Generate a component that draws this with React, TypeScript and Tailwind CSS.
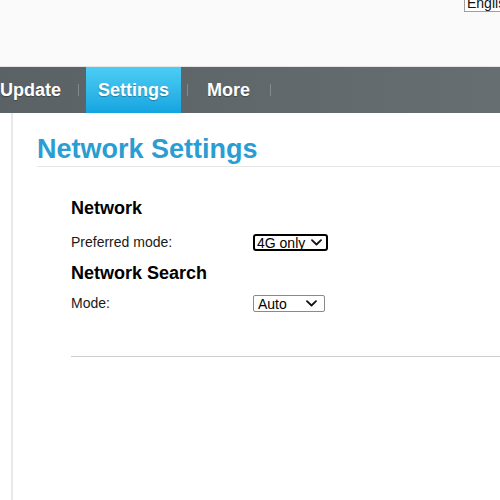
import React from "react";

function Chevron() {
  return (
    <svg width="11" height="7" viewBox="0 0 11 7" fill="none">
      <path d="M1 1.2 L5.5 5.5 L10 1.2" stroke="#111" strokeWidth="1.8" strokeLinecap="round" strokeLinejoin="round" />
    </svg>
  );
}

function Sep() {
  return <div className="w-px h-[12px] bg-[#9aa2a6] opacity-60" />;
}

export default function App() {
  return (
    <div className="w-[500px] h-[500px] overflow-hidden bg-white flex flex-col" style={{ fontFamily: '"Liberation Sans", Arial, sans-serif' }}>
      {/* header */}
      <div className="h-[67px] bg-[#fafafa] border-b border-[#e4e4e4] flex items-start pl-[464px] overflow-hidden">
        <div className="-mt-[5px] h-[17px] border border-[#a0a0a0] bg-white px-[2px] text-[14px] leading-[15px] text-[#111] whitespace-nowrap">
          English
        </div>
      </div>
      {/* nav */}
      <div className="h-[46px] bg-gradient-to-r from-[#5a6266] via-[#60686c] to-[#666e72] flex items-stretch">
        <div className="flex items-center text-white font-bold text-[18px] [text-shadow:0_1px_1px_rgba(0,0,0,0.35)]">
          Update
        </div>
        <div className="flex items-center ml-[17px]"><Sep /></div>
        <div className="ml-[7px] w-[95px] flex items-center justify-center bg-gradient-to-b from-[#4bcdf5] to-[#12a5df] text-white font-bold text-[18px] [text-shadow:0_1px_1px_rgba(0,0,0,0.3)]">
          Settings
        </div>
        <div className="flex items-center ml-[6px]"><Sep /></div>
        <div className="ml-[19px] flex items-center text-white font-bold text-[18px] [text-shadow:0_1px_1px_rgba(0,0,0,0.35)]">
          More
        </div>
        <div className="flex items-center ml-[20px]"><Sep /></div>
      </div>
      {/* body */}
      <div className="flex-1 flex">
        <div className="ml-[11px] w-[2px] bg-[#e8e8e8]" />
        <div className="flex-1 pl-[24px] pt-[19px]">
          <h1 className="text-[27px] font-bold text-[#2a9dd3] leading-[34px] border-b border-[#e6e6e6]">
            Network Settings
          </h1>
          <div className="pl-[34px] pt-[30px]">
            <h2 className="text-[18px] font-bold text-black leading-[22px]">Network</h2>
            <div className="flex items-center mt-[15px] h-[17px]">
              <div className="w-[182px] text-[14px] text-[#1a1a1a]">Preferred mode:</div>
              <div className="w-[75px] h-[17px] border-2 border-black rounded-[3px] flex items-center justify-between pl-[2px] pr-[4px] text-[14px] text-black">
                <span className="leading-[14px]">4G only</span>
                <Chevron />
              </div>
            </div>
            <h2 className="text-[18px] font-bold text-black leading-[22px] mt-[11px]">Network Search</h2>
            <div className="flex items-center mt-[11px] h-[17px]">
              <div className="w-[182px] text-[14px] text-[#1a1a1a]">Mode:</div>
              <div className="w-[72px] h-[17px] border border-[#8a8a8a] rounded-[2px] flex items-center justify-between pl-[4px] pr-[7px] text-[14px] text-black">
                <span className="leading-[14px]">Auto</span>
                <Chevron />
              </div>
            </div>
            <div className="mt-[44px] border-t border-[#cfcfcf]" />
          </div>
        </div>
      </div>
    </div>
  );
}
